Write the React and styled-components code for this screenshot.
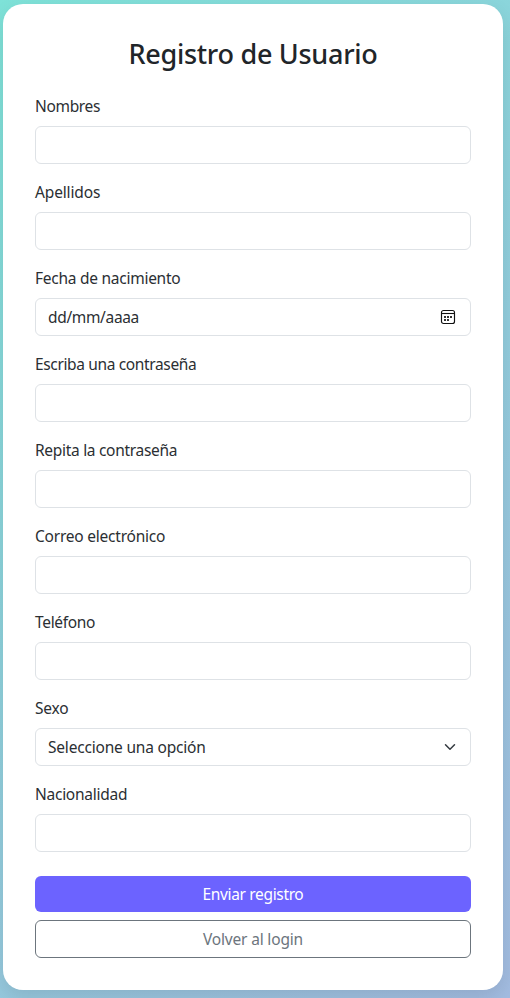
import React from "react";
import styled, { createGlobalStyle } from "styled-components";

const GlobalStyle = createGlobalStyle`
  *, *::before, *::after { box-sizing: border-box; }
  body {
    margin: 0;
    overflow: hidden;
    background: #8fcbd6;
    color: #2b2f33;
    font: 400 15.5px/24px "Segoe UI", "Noto Sans", sans-serif;
  }
`;

const Page = styled.main`
  height: 998px;
  padding: 4px 7px 8px 3px;
  overflow: hidden;
  background: linear-gradient(135deg, #7ee2d8, #a3bce1);
`;

const Card = styled.form`
  width: 500px;
  height: 986px;
  padding: 32px;
  border-radius: 20px;
  background: #fff;
  box-shadow: 0 8px 20px rgba(0, 0, 0, 0.1);
`;

const Title = styled.h1`
  margin: 0 0 24px;
  height: 34px;
  color: #212529;
  font-size: 27px;
  font-weight: 500;
  line-height: 36px;
  text-align: center;
  white-space: nowrap;
`;

const Text = styled.span`
  letter-spacing: ${(p) => p.$track || 0}px;
  white-space: nowrap;
`;

const Field = styled.div`
  margin-bottom: 16px;
`;

const Label = styled.label`
  display: block;
  height: 24px;
  margin-bottom: 8px;
`;

const Input = styled.input`
  display: block;
  width: 436px;
  height: 38px;
  padding: 6px 12px;
  border: 1px solid #dee2e6;
  border-radius: 6px;
  background: #fff;
  color: inherit;
  font: inherit;
  outline: none;
`;

const Picker = styled.div`
  display: flex;
  align-items: center;
  justify-content: space-between;
  width: 436px;
  height: 38px;
  padding: 0 ${(p) => p.$right}px 0 12px;
  border: 1px solid #dee2e6;
  border-radius: 6px;
`;

const Button = styled.button`
  display: block;
  width: 436px;
  height: ${(p) => (p.$outline ? 38 : 36)}px;
  margin-top: 8px;
  padding: 0;
  border: ${(p) => (p.$outline ? "1px solid #6c757d" : "0")};
  border-radius: 6px;
  background: ${(p) => (p.$outline ? "transparent" : "#6c63ff")};
  color: ${(p) => (p.$outline ? "#6c757d" : "#fff")};
  font: inherit;
`;

const Actions = styled.div`
  margin-top: 24px;

  ${Button}:first-child {
    margin-top: 0;
  }
`;

function CalendarIcon() {
  return (
    <svg width="16" height="16" viewBox="0 0 16 16" fill="none">
      <rect x="1.5" y="1.5" width="13" height="13" rx="2" stroke="#111" strokeWidth="1.15" />
      <path d="M1.5 4.5h13" stroke="#111" strokeWidth="1.1" />
      <path
        d="M4 7h2v2H4zM7 7h2v2H7zM10 7h2v2h-2zM4 10h2v2H4zM7 10h2v2H7z"
        fill="#333"
      />
    </svg>
  );
}

function ChevronIcon() {
  return (
    <svg width="16" height="12" viewBox="0 0 16 16" fill="none">
      <path d="m2 5 6 6 6-6" stroke="#343a40" strokeWidth="2" strokeLinecap="round" strokeLinejoin="round" />
    </svg>
  );
}

const fields = [
  { id: "nombres", label: "Nombres", track: -0.33 },
  { id: "apellidos", label: "Apellidos", track: -0.15 },
  { id: "fecha", label: "Fecha de nacimiento", track: -0.26, kind: "date" },
  { id: "clave", label: "Escriba una contraseña", track: -0.36, type: "password" },
  { id: "clave2", label: "Repita la contraseña", track: -0.3, type: "password" },
  { id: "correo", label: "Correo electrónico", track: -0.22, type: "email" },
  { id: "telefono", label: "Teléfono", track: -0.32, type: "tel" },
  { id: "sexo", label: "Sexo", track: -0.22, kind: "select" },
  { id: "nacionalidad", label: "Nacionalidad", track: -0.26 },
];

function Control({ field }) {
  if (field.kind === "date") {
    return (
      <Picker $right={14}>
        <Text $track={-0.34}>dd/mm/aaaa</Text>
        <CalendarIcon />
      </Picker>
    );
  }
  if (field.kind === "select") {
    return (
      <Picker $right={12}>
        <Text $track={-0.2}>Seleccione una opción</Text>
        <ChevronIcon />
      </Picker>
    );
  }
  return <Input id={field.id} type={field.type || "text"} />;
}

export default function App() {
  return (
    <>
      <GlobalStyle />
      <Page>
        <Card>
          <Title>
            <Text $track={-0.28}>Registro de Usuario</Text>
          </Title>
          {fields.map((field) => (
            <Field key={field.id}>
              <Label htmlFor={field.id}>
                <Text $track={field.track}>{field.label}</Text>
              </Label>
              <Control field={field} />
            </Field>
          ))}
          <Actions>
            <Button type="button">
              <Text $track={-0.35}>Enviar registro</Text>
            </Button>
            <Button type="button" $outline>
              <Text $track={-0.18}>Volver al login</Text>
            </Button>
          </Actions>
        </Card>
      </Page>
    </>
  );
}
